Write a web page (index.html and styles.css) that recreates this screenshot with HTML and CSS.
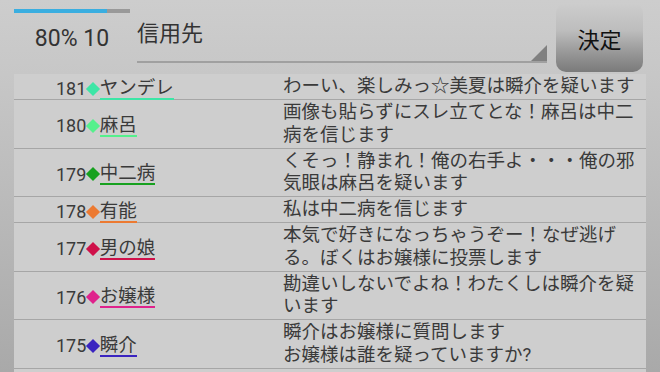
FILE: index.html
```html
<!DOCTYPE html>
<html lang="ja">
<head>
    <meta charset="UTF-8">
    <meta name="viewport" content="width=device-width, initial-scale=1.0">
    <title>投票</title>
    <link rel="stylesheet" href="styles.css">
</head>
<body>
    <div class="top">
        <div class="status">
            <div class="progress"><div class="progress-fill" style="width: 80%"></div></div>
            <div class="status-text">80% 10</div>
        </div>
        <div class="target">信用先</div>
        <button class="decide">決定</button>
    </div>

    <ul class="log">
        <li class="entry">
            <div class="who"><span class="no">181</span><span class="mark c-mint"></span><span class="name c-mint">ヤンデレ</span></div>
            <div class="msg">わーい、楽しみっ☆美夏は瞬介を疑います</div>
        </li>
        <li class="entry">
            <div class="who"><span class="no">180</span><span class="mark c-lime"></span><span class="name c-lime">麻呂</span></div>
            <div class="msg">画像も貼らずにスレ立てとな！麻呂は中二病を信じます</div>
        </li>
        <li class="entry">
            <div class="who"><span class="no">179</span><span class="mark c-green"></span><span class="name c-green">中二病</span></div>
            <div class="msg">くそっ！静まれ！俺の右手よ・・・俺の邪気眼は麻呂を疑います</div>
        </li>
        <li class="entry">
            <div class="who"><span class="no">178</span><span class="mark c-orange"></span><span class="name c-orange">有能</span></div>
            <div class="msg">私は中二病を信じます</div>
        </li>
        <li class="entry">
            <div class="who"><span class="no">177</span><span class="mark c-red"></span><span class="name c-red">男の娘</span></div>
            <div class="msg">本気で好きになっちゃうぞー！なぜ逃げる。ぼくはお嬢様に投票します</div>
        </li>
        <li class="entry">
            <div class="who"><span class="no">176</span><span class="mark c-pink"></span><span class="name c-pink">お嬢様</span></div>
            <div class="msg">勘違いしないでよね！わたくしは瞬介を疑います</div>
        </li>
        <li class="entry">
            <div class="who"><span class="no">175</span><span class="mark c-blue"></span><span class="name c-blue">瞬介</span></div>
            <div class="msg">瞬介はお嬢様に質問します<br>お嬢様は誰を疑っていますか?</div>
        </li>
    </ul>
</body>
</html>
```

FILE: styles.css
```css
body {
    margin: 0;
    width: 660px;
    height: 372px;
    overflow: hidden;
    background: linear-gradient(to bottom, #cdcdcd 0%, #c7c7c7 20%, #a9a9a9 100%);
    font-family: Roboto, "Noto Sans CJK JP", sans-serif;
    color: #3a3a3a;
}

.top {
    display: flex;
    align-items: flex-start;
    padding: 3px 17px 0 14px;
    height: 69px;
}

.status {
    width: 116px;
}

.progress {
    height: 4px;
    margin-top: 6px;
    background-color: #999;
}

.progress-fill {
    height: 100%;
    background-color: #3aaee0;
}

.status-text {
    margin-top: 13px;
    text-align: center;
    font-size: 23px;
    line-height: 26px;
    color: #333;
}

.target {
    position: relative;
    width: 410px;
    height: 60px;
    box-sizing: border-box;
    margin-left: 7px;
    padding-top: 20px;
    border-bottom: 2px solid #a0a0a0;
    font-size: 22px;
    line-height: 22px;
    color: #333;
}

/* spinner corner */
.target::after {
    content: "";
    position: absolute;
    right: 0;
    bottom: 0;
    width: 16px;
    height: 16px;
    background-color: #808080;
    clip-path: polygon(100% 0, 100% 100%, 0 100%);
}

.decide {
    width: 87px;
    height: 69px;
    margin-left: 9px;
    border: none;
    border-radius: 10px;
    background: linear-gradient(to bottom, #cdcdcd 0%, #bdbdbd 40%, #9a9a9a 70%, #7a7a7a 100%);
    font-family: Roboto, "Noto Sans CJK JP", sans-serif;
    font-size: 22px;
    color: #111;
    padding: 0;
}

.log {
    list-style: none;
    margin: 2px 14px 0 14px;
    padding: 0 0 20px 0;
    background-color: #cecece;
}

.entry {
    display: flex;
    padding: 1.25px 0;
    border-bottom: 1px solid #a6a6a6;
}

.who {
    width: 227px;
    padding-left: 42px;
    display: flex;
    align-items: center;
    white-space: nowrap;
}

.no {
    font-size: 18px;
    position: relative;
    top: 2px;
}

.mark {
    display: inline-block;
    width: 10px;
    height: 10px;
    margin: 0 2px 0 1.5px;
    transform: translateY(2px) rotate(45deg);
    background-color: var(--c);
}

.name {
    display: inline-block;
    font-size: 18.5px;
    line-height: 20px;
    border-bottom: 2px solid var(--c);
    position: relative;
    top: 2px;
}

.msg {
    flex: 1;
    padding-right: 8px;
    font-size: 18.5px;
    line-height: 22.5px;
}

.c-mint { --c: #3de6a6; }
.c-lime { --c: #55f08c; }
.c-green { --c: #17a11f; }
.c-orange { --c: #ec7a32; }
.c-red { --c: #cf114a; }
.c-pink { --c: #df228c; }
.c-blue { --c: #3a24c0; }
```
